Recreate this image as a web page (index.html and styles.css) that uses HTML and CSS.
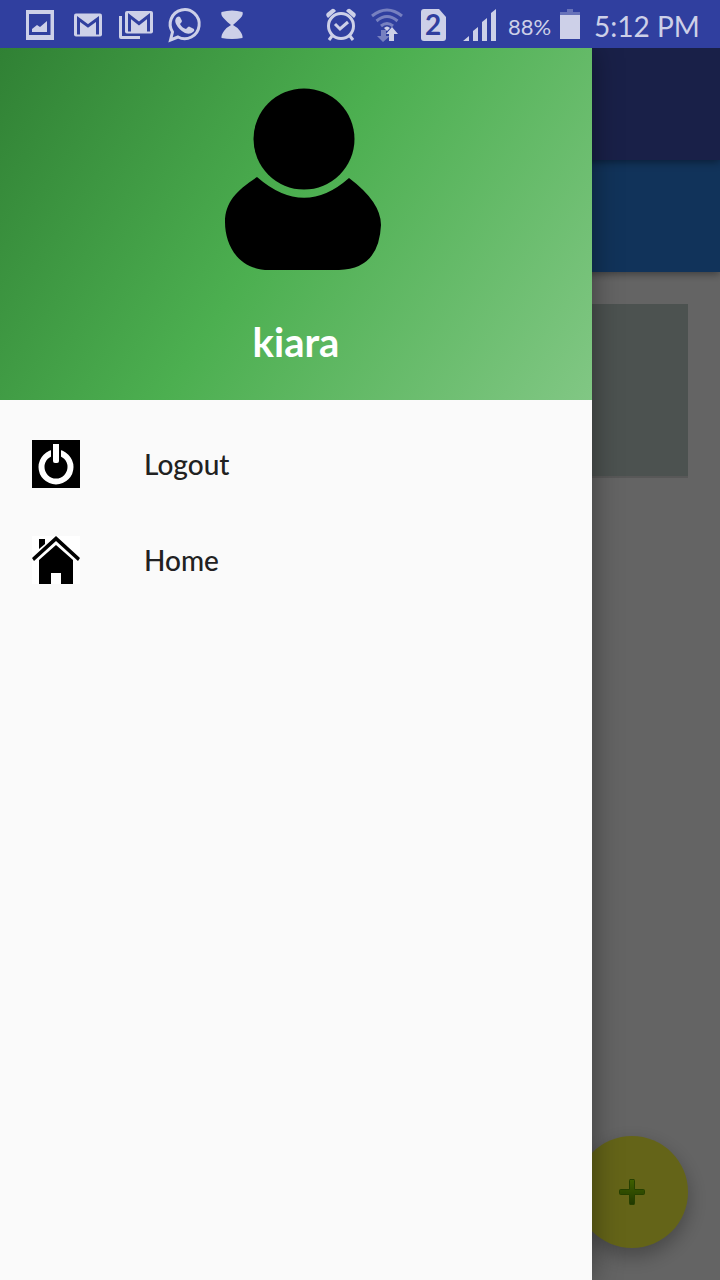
FILE: index.html
```
<!DOCTYPE html>
<html lang="en">
<head>
<meta charset="utf-8">
<meta name="viewport" content="width=device-width, initial-scale=1">
<title>Navigation drawer</title>
<link rel="stylesheet" href="styles.css">
</head>
<body>
<div class="screen">
  <header class="status">
    <div class="status-group">
      <svg class="notice" viewBox="0 0 48 48" aria-hidden="true"><path fill-rule="evenodd" d="M10 10h28v30H10zM13 14v21h21.500V14zM16 32v-3l5-4 3 2 7-6v11z"/></svg>
      <svg class="notice" viewBox="0 0 48 48" aria-hidden="true"><rect x="10" y="13.500" width="28" height="23" rx="2"/><path class="cut" d="M14.500 34.500V19l9.500 7 9.500-7v15.500"/></svg>
      <svg class="notice" viewBox="0 0 48 48" aria-hidden="true"><path d="M7 16h3v20h18v3H9q-2 0-2-2z"/><rect x="13" y="11" width="28" height="22.500" rx="2"/><path class="cut" d="M17.500 31.500V16l9.500 7.500 9.500-7.500v15.500"/></svg>
      <svg class="notice" viewBox="0 0 48 48" aria-hidden="true"><path class="line" d="M10.500 40l2-8A14.500 14.500 0 1 1 18 37z"/><path d="M17 17q2-1 3 0l2 4q0 1-2 3 2 4 6 5l2-2q1-1 2 0l4 2q1 2-1 3-3 3-8 1-6-3-9-9-2-4 1-7z"/></svg>
      <svg class="notice" viewBox="0 0 48 48" aria-hidden="true"><path d="M13.500 12q10.500-3 21 0 1 3-2 6-4 4-7.500 7 4 2 7 6 3 4 2.500 7-10.500 2-21 0-.5-3 2.500-7 3-4 7-6-4-3-7.500-7-3-3-2-6z"/></svg>
    </div>
    <div class="status-group">
      <svg class="system" viewBox="0 0 46 48" aria-hidden="true"><circle class="line" cx="23" cy="26" r="12.500"/><path class="line" d="M17 24l5 5 8-7M14 36l-3 4M32 36l3 4"/><path d="M10 18q-3-3-1-5l5-4q2-1 4 2zM36 18q3-3 1-5l-5-4q-2-1-4 2z"/></svg>
      <svg class="system" viewBox="0 0 46 48" aria-hidden="true"><g opacity=".45"><path class="line" d="M8 16q15-12 30 0M12.500 21q10.500-9 21 0M17 26q6-5 12 0"/><path d="M17 30h5v6h4l-7 6-6-6h4z"/></g><path d="M20 28q3-3 6 0l-3 3zM28 27l6 7h-4v7h-5v-7h-3z"/></svg>
      <svg class="system" viewBox="0 0 46 48" aria-hidden="true"><path d="M14 9h15l7 8v21q0 3-3 3H14q-3 0-3-3V12q0-3 3-3z"/><text class="sim-number" x="23" y="35" text-anchor="middle">2</text></svg>
      <svg class="system" viewBox="0 0 46 48" aria-hidden="true"><path d="M7 41l6-5v5zM17 41V31l5-4v14zM26 41V22l5-4v23zM35 41V13l5-4v32z"/></svg>
      <span class="charge">88%</span>
      <svg class="battery" viewBox="0 0 20 48" aria-hidden="true"><path opacity=".35" d="M7 9h6v3h7v3H0v-3h7z"/><path d="M0 15h20v24H0z"/></svg>
      <time class="clock">5:12 PM</time>
    </div>
  </header>

  <div class="app">
    <main class="page">
      <div class="toolbar"></div>
      <div class="tabs"></div>
      <div class="card"></div>
      <button class="fab" type="button" aria-label="Add">
        <svg class="plus" viewBox="0 0 26 26" aria-hidden="true"><defs><linearGradient id="leaf" x1="0" y1="0" x2="0" y2="1"><stop offset="0" stop-color="#a0f000"/><stop offset="1" stop-color="#508c00"/></linearGradient></defs><path fill="url(#leaf)" stroke="#60a000" d="M11 .5h4q.5 0 .5 1v9h9q1 0 1 1v3q0 1-1 1h-9v9q0 1-.5 1h-4q-.5 0-.5-1v-9h-9q-1 0-1-1v-3q0-1 1-1h9v-9q0-1 .5-1z"/></svg>
      </button>
    </main>
    <div class="scrim"></div>
    <aside class="drawer">
      <div class="profile">
        <svg class="avatar" viewBox="0 0 156 182" aria-hidden="true"><circle cx="79" cy="51" r="50.500"/><path d="M32 89Q79 130 124 90Q156 114 156 137Q154 181 114 182H44C14 182 0 158 0 134C0 114 12 102 32 89z"/></svg>
        <h1 class="name">kiara</h1>
      </div>
      <nav class="menu">
        <a class="item" href="#logout">
          <svg class="item-icon" viewBox="0 0 48 48" aria-hidden="true"><path d="M0 0h48v48H0z"/><circle cx="24" cy="27" r="14.500" fill="none" stroke="#fff" stroke-width="6"/><path d="M19 2h10v21H19z"/><path fill="#fff" d="M21 4h6v17q0 2-2 2h-2q-2 0-2-2z"/></svg>
          <span>Logout</span>
        </a>
        <a class="item" href="#home">
          <svg class="item-icon" viewBox="0 0 48 48" aria-hidden="true"><path fill="#fff" d="M0 0h48v48H0z"/><path d="M7 3h6v5l-6 5zM24 0l24 22-2 3L24 5 2 25l-2-3z"/><path d="M24 9l17 15v24H29V37H19v11H7V24z"/></svg>
          <span>Home</span>
        </a>
      </nav>
    </aside>
  </div>
</div>
</body>
</html>
```
FILE: styles.css
```
* {
  box-sizing: border-box;
}

body {
  margin: 0;
  font-family: Lato, "Liberation Sans", sans-serif;
}

.screen {
  display: flex;
  flex-direction: column;
  min-height: 100vh;
}

.status {
  position: relative;
  z-index: 4;
  display: flex;
  justify-content: space-between;
  height: 48px;
  padding: 0 20px 0 16px;
  background: #303f9f;
  color: #cdd0e8;
}

.status-group {
  display: flex;
  align-items: center;
}

.status svg {
  height: 48px;
  fill: #cdd0e8;
}

.status .line {
  fill: none;
  stroke: #cdd0e8;
  stroke-width: 3;
}

.status .cut {
  fill: none;
  stroke: #303f9f;
  stroke-width: 3;
}

.notice {
  width: 48px;
}

.system {
  width: 46px;
}

.status .sim-number {
  fill: #303f9f;
  font-size: 28px;
  font-weight: 700;
}

.charge {
  width: 52px;
  margin-left: 6px;
  padding-top: 4px;
  font-size: 22px;
}

.battery {
  width: 20px;
}

.clock {
  width: 106px;
  margin-left: 14px;
  padding-top: 4px;
  font-size: 28px;
  white-space: nowrap;
}

.app {
  position: relative;
  display: flex;
  flex: 1;
}

.page {
  flex: 1;
  background: #fafafa;
}

.toolbar,
.tabs {
  position: relative;
  height: 112px;
}

.toolbar {
  z-index: 1;
  background: #3f51b5;
  box-shadow: 0 2px 8px rgba(0, 0, 0, 0.4);
}

.tabs {
  background: #2c7fe0;
  box-shadow: 0 2px 8px rgba(0, 0, 0, 0.4);
}

.card {
  height: 172px;
  margin: 32px;
  background: #becdc8;
  box-shadow: 0 2px 0 #dcdcdc;
}

.fab {
  position: absolute;
  right: 32px;
  bottom: 32px;
  display: grid;
  place-items: center;
  width: 112px;
  height: 112px;
  padding: 0;
  border: 0;
  border-radius: 50%;
  background: #fafa3c;
  box-shadow: 0 8px 20px rgba(0, 0, 0, 0.3);
}

.plus {
  width: 26px;
}

.scrim {
  position: absolute;
  inset: 0;
  z-index: 2;
  background: rgba(0, 0, 0, 0.6);
}

.drawer {
  position: absolute;
  top: 0;
  bottom: 0;
  left: 0;
  z-index: 3;
  width: calc(100% - 128px);
  max-width: 640px;
  background: #fafafa;
  box-shadow: 0 0 28px rgba(0, 0, 0, 0.4);
}

.profile {
  display: flex;
  flex-direction: column;
  align-items: center;
  height: 352px;
  padding-top: 40px;
  background: linear-gradient(124deg, #2e7d32, #4caf50, #81c784) 0 100% / 100% 400px;
}

.avatar {
  width: 156px;
  height: 182px;
  margin-left: 14px;
}

.name {
  margin: 48px 0 0;
  color: #fff;
  font-size: 40px;
  font-weight: 700;
  line-height: 48px;
}

.menu {
  padding: 16px 0;
}

.item {
  display: flex;
  align-items: center;
  gap: 64px;
  height: 96px;
  padding: 0 32px;
  color: #212121;
  font-size: 28px;
  font-weight: 500;
  text-decoration: none;
}

.item-icon {
  width: 48px;
  height: 48px;
}
```
